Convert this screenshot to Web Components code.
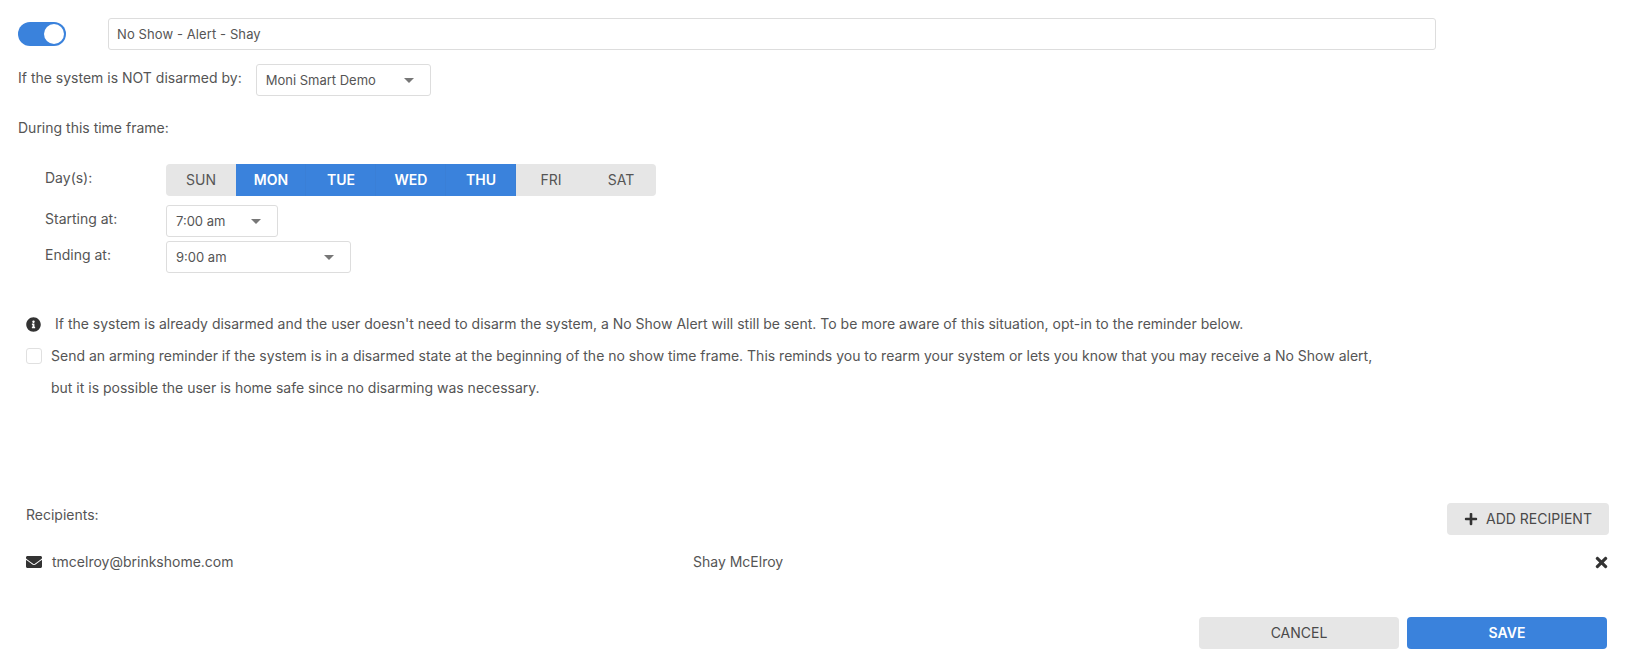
<!DOCTYPE html>
<html>
<head>
<meta charset="utf-8">
<title>No Show Alert</title>
<style>
    body { margin: 0; background: #fff; color: #555; font: 14px/20px Inter, "Noto Sans", sans-serif; }
</style>
</head>
<body>
<no-show-form></no-show-form>

<script>
const ICONS = {
    info: ['0 0 512 512', 'M256 8C119.043 8 8 119.083 8 256c0 136.997 111.043 248 248 248s248-111.003 248-248C504 119.083 392.957 8 256 8zm0 110c23.196 0 42 18.804 42 42s-18.804 42-42 42-42-18.804-42-42 18.804-42 42-42zm56 254c0 6.627-5.373 12-12 12h-88c-6.627 0-12-5.373-12-12v-24c0-6.627 5.373-12 12-12h12v-64h-12c-6.627 0-12-5.373-12-12v-24c0-6.627 5.373-12 12-12h64c6.627 0 12 5.373 12 12v100h12c6.627 0 12 5.373 12 12v24z'],
    envelope: ['0 0 512 512', 'M502.3 190.8c3.9-3.1 9.7-.2 9.7 4.7V400c0 26.5-21.5 48-48 48H48c-26.5 0-48-21.5-48-48V195.6c0-5 5.7-7.8 9.7-4.7 22.4 17.4 52.1 39.5 154.1 113.6 21.1 15.4 56.7 47.8 92.2 47.6 35.7.3 72-32.8 92.3-47.6 102-74.1 131.6-96.3 154-113.7zM256 320c23.2.4 56.6-29.2 73.4-41.4 132.7-96.3 142.8-104.7 173.4-128.7 5.8-4.5 9.2-11.5 9.2-18.9v-19c0-26.5-21.5-48-48-48H48C21.5 64 0 85.5 0 112v19c0 7.4 3.4 14.3 9.2 18.9 30.6 23.9 40.7 32.4 173.4 128.7 16.8 12.2 50.2 41.8 73.4 41.4z'],
    times: ['0 0 352 512', 'M242.72 256l100.07-100.07c12.28-12.28 12.28-32.19 0-44.48l-22.24-22.24c-12.28-12.28-32.19-12.28-44.48 0L176 189.28 75.93 89.21c-12.28-12.28-32.19-12.28-44.48 0L9.21 111.45c-12.28 12.28-12.28 32.19 0 44.48L109.28 256 9.21 356.07c-12.28 12.28-12.28 32.19 0 44.48l22.24 22.24c12.28 12.28 32.2 12.28 44.48 0L176 322.72l100.07 100.07c12.28 12.28 32.2 12.28 44.48 0l22.24-22.24c12.28-12.28 12.28-32.19 0-44.48L242.72 256z'],
    plus: ['0 0 448 512', 'M416 208H272V64c0-17.67-14.33-32-32-32h-32c-17.67 0-32 14.33-32 32v144H32c-17.67 0-32 14.33-32 32v32c0 17.67 14.33 32 32 32h144v144c0 17.67 14.33 32 32 32h32c17.67 0 32-14.33 32-32V304h144c17.67 0 32-14.33 32-32v-32c0-17.67-14.33-32-32-32z']
};

class FaIcon extends HTMLElement {
    connectedCallback() {
        const [box, d] = ICONS[this.getAttribute('name')];
        const size = this.getAttribute('size') || 16;
        this.attachShadow({ mode: 'open' }).innerHTML = `
            <style>
                :host { display: inline-flex; flex: none; }
                svg { display: block; fill: #333; }
            </style>
            <svg width="${size}" height="${size}" viewBox="${box}"><path d="${d}"/></svg>
        `;
    }
}
customElements.define('fa-icon', FaIcon);

class ToggleSwitch extends HTMLElement {
    constructor() {
        super();
        this.attachShadow({ mode: 'open' }).innerHTML = `
            <style>
                :host {
                    display: flex; justify-content: flex-end; align-items: center;
                    box-sizing: border-box; width: 48px; height: 24px; padding: 2px;
                    background: #3a82dc; border-radius: 12px;
                }
                i { display: block; width: 20px; height: 20px; background: #fff; border-radius: 50%; }
            </style>
            <i></i>
        `;
    }
}
customElements.define('toggle-switch', ToggleSwitch);

class TextField extends HTMLElement {
    constructor() {
        super();
        this.attachShadow({ mode: 'open' }).innerHTML = `
            <style>
                :host {
                    display: flex; align-items: center; box-sizing: border-box;
                    height: 32px; padding: 0 8px; background: #fff;
                    border: 1px solid #ddd; border-radius: 3px;
                    font-size: 13px; letter-spacing: 0.1px; color: #555;
                }
            </style>
            <slot></slot>
        `;
    }
}
customElements.define('text-field', TextField);

class SelectBox extends HTMLElement {
    constructor() {
        super();
        this.attachShadow({ mode: 'open' }).innerHTML = `
            <style>
                :host {
                    display: flex; align-items: center; justify-content: space-between;
                    box-sizing: border-box; height: 32px; padding: 0 16px 0 9px;
                    background: #fff; border: 1px solid #ddd; border-radius: 3px;
                    font-size: 13px; color: #555;
                }
                i {
                    width: 0; height: 0; border-style: solid; border-width: 5px 5px 0;
                    border-color: #777 transparent transparent;
                }
            </style>
            <slot></slot><i></i>
        `;
    }
}
customElements.define('select-box', SelectBox);

class DayPicker extends HTMLElement {
    constructor() {
        super();
        const on = (this.getAttribute('selected') || '').split(',');
        const days = ['SUN', 'MON', 'TUE', 'WED', 'THU', 'FRI', 'SAT'];
        this.attachShadow({ mode: 'open' }).innerHTML = `
            <style>
                :host {
                    display: grid; grid-template-columns: repeat(7, 70px);
                    height: 32px; background: #e6e6e6; border-radius: 4px; overflow: hidden;
                    font-size: 14px; color: #555;
                }
                span { display: flex; align-items: center; justify-content: center; padding-bottom: 1px; }
                .on { background: #3a82dc; color: #fff; font-weight: 600; box-shadow: inset -1px 0 0 #3a7fd6; }
            </style>
            ${days.map(d => `<span class="${on.includes(d) ? 'on' : ''}">${d}</span>`).join('')}
        `;
    }
}
customElements.define('day-picker', DayPicker);

class AppButton extends HTMLElement {
    constructor() {
        super();
        this.attachShadow({ mode: 'open' }).innerHTML = `
            <style>
                :host {
                    display: flex; align-items: center; justify-content: center; gap: 8px;
                    box-sizing: border-box; height: 32px; background: #e6e6e6; color: #4a4a4a;
                    border-radius: 4px; font-size: 14px;
                }
                :host([primary]) { background: #3a82dc; color: #fff; font-weight: 600; }
            </style>
            <slot></slot>
        `;
    }
}
customElements.define('app-button', AppButton);

class NoShowForm extends HTMLElement {
    constructor() {
        super();
        this.attachShadow({ mode: 'open' }).innerHTML = `
            <style>
                :host { display: block; height: 660px; box-sizing: border-box; padding-top: 18px; color: #555; }
                .name { display: flex; align-items: center; gap: 42px; padding-left: 18px; margin-right: 195px; }
                .name text-field { flex: 1; }
                .by { display: flex; gap: 14px; padding-left: 18px; margin-top: 14px; }
                .by span { line-height: 28px; }
                .by select-box { width: 175px; }
                .frame { margin: 22px 0 0 18px; line-height: 20px; }
                .times {
                    display: grid; grid-template-columns: 121px auto; justify-content: start;
                    margin: 26px 0 0 45px; row-gap: 9px;
                }
                .times span { line-height: 28px; }
                .times .end { margin-top: -5px; }
                .start { width: 112px; }
                .stop { width: 185px; }
                .note { margin: 35px 44px 0 26px; white-space: nowrap; }
                .line { display: flex; align-items: center; gap: 14px; height: 32px; }
                .check {
                    box-sizing: border-box; width: 16px; height: 16px; flex: none;
                    border: 1px solid #e0e0e0; border-radius: 3px; margin-right: -5px;
                }
                .line.info { gap: 14px; margin-bottom: 0; }
                .more { padding-left: 25px; height: 32px; line-height: 32px; }
                .recipients { display: flex; justify-content: space-between; margin: 99px 22px 0 26px; }
                .recipients span { line-height: 24px; }
                .recipients app-button { width: 162px; }
                .recipient {
                    display: grid; grid-template-columns: 667px 1fr auto; align-items: center;
                    margin: 15px 21px 0 26px; height: 24px;
                }
                .mail { display: flex; align-items: center; gap: 10px; }
                .actions { display: flex; justify-content: flex-end; gap: 8px; margin: 43px 24px 0 0; }
                .actions app-button { width: 200px; }
            </style>
            <div class="name">
                <toggle-switch></toggle-switch>
                <text-field>No Show - Alert - Shay</text-field>
            </div>
            <div class="by">
                <span>If the system is NOT disarmed by:</span>
                <select-box>Moni Smart Demo</select-box>
            </div>
            <div class="frame">During this time frame:</div>
            <div class="times">
                <span>Day(s):</span>
                <day-picker selected="MON,TUE,WED,THU"></day-picker>
                <span>Starting at:</span>
                <select-box class="start">7:00 am</select-box>
                <span class="end">Ending at:</span>
                <select-box class="stop end">9:00 am</select-box>
            </div>
            <div class="note">
                <div class="line info">
                    <fa-icon name="info" size="15"></fa-icon>
                    <span>If the system is already disarmed and the user doesn't need to disarm the system, a No Show Alert will still be sent. To be more aware of this situation, opt-in to the reminder below.</span>
                </div>
                <div class="line">
                    <span class="check"></span>
                    <span>Send an arming reminder if the system is in a disarmed state at the beginning of the no show time frame. This reminds you to rearm your system or lets you know that you may receive a No Show alert,</span>
                </div>
                <div class="more">but it is possible the user is home safe since no disarming was necessary.</div>
            </div>
            <div class="recipients">
                <span>Recipients:</span>
                <app-button><fa-icon name="plus" size="14"></fa-icon>ADD RECIPIENT</app-button>
            </div>
            <div class="recipient">
                <div class="mail"><fa-icon name="envelope" size="16"></fa-icon><span>tmcelroy@brinkshome.com</span></div>
                <span>Shay McElroy</span>
                <fa-icon name="times" size="17"></fa-icon>
            </div>
            <div class="actions">
                <app-button>CANCEL</app-button>
                <app-button primary>SAVE</app-button>
            </div>
        `;
    }
}
customElements.define('no-show-form', NoShowForm);
</script>
</body>
</html>
